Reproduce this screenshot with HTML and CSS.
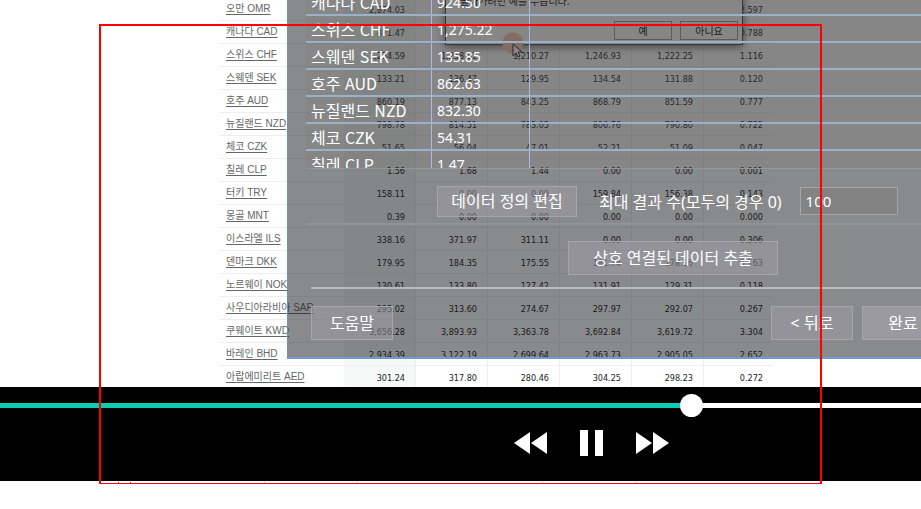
FILE: index.html
```html
<!DOCTYPE html>
<html lang="ko">
<head>
<meta charset="utf-8">
<title>환율 데이터</title>
<link rel="stylesheet" href="styles.css">
</head>
<body>
<main class="video">
  <section class="stage">
    <table class="rates">
      <tbody>
        <tr><th><a href="#">오만 OMR</a></th><td>2,874.03</td><td></td><td></td><td></td><td></td><td>2.597</td></tr>
        <tr><th><a href="#">캐나다 CAD</a></th><td>871.47</td><td></td><td></td><td></td><td></td><td>0.788</td></tr>
        <tr><th><a href="#">스위스 CHF</a></th><td>1,234.59</td><td>1,258.91</td><td>1,210.27</td><td>1,246.93</td><td>1,222.25</td><td>1.116</td></tr>
        <tr><th><a href="#">스웨덴 SEK</a></th><td>133.21</td><td>136.47</td><td>129.95</td><td>134.54</td><td>131.88</td><td>0.120</td></tr>
        <tr><th><a href="#">호주 AUD</a></th><td>860.19</td><td>877.13</td><td>843.25</td><td>868.79</td><td>851.59</td><td>0.777</td></tr>
        <tr><th><a href="#">뉴질랜드 NZD</a></th><td>798.78</td><td>814.51</td><td>783.05</td><td>806.76</td><td>790.80</td><td>0.722</td></tr>
        <tr><th><a href="#">체코 CZK</a></th><td>51.65</td><td>56.04</td><td>47.01</td><td>52.21</td><td>51.09</td><td>0.047</td></tr>
        <tr><th><a href="#">칠레 CLP</a></th><td>1.56</td><td>1.68</td><td>1.44</td><td>0.00</td><td>0.00</td><td>0.001</td></tr>
        <tr><th><a href="#">터키 TRY</a></th><td>158.11</td><td>0.00</td><td>0.00</td><td>159.84</td><td>156.38</td><td>0.143</td></tr>
        <tr><th><a href="#">몽골 MNT</a></th><td>0.39</td><td>0.00</td><td>0.00</td><td>0.00</td><td>0.00</td><td>0.000</td></tr>
        <tr><th><a href="#">이스라엘 ILS</a></th><td>338.16</td><td>371.97</td><td>311.11</td><td>0.00</td><td>0.00</td><td>0.306</td></tr>
        <tr><th><a href="#">덴마크 DKK</a></th><td>179.95</td><td>184.35</td><td>175.55</td><td>181.74</td><td>178.16</td><td>0.163</td></tr>
        <tr><th><a href="#">노르웨이 NOK</a></th><td>130.61</td><td>133.80</td><td>127.42</td><td>131.91</td><td>129.31</td><td>0.118</td></tr>
        <tr><th><a href="#">사우디아라비아 SAR</a></th><td>295.02</td><td>313.60</td><td>274.67</td><td>297.97</td><td>292.07</td><td>0.267</td></tr>
        <tr><th><a href="#">쿠웨이트 KWD</a></th><td>3,656.28</td><td>3,893.93</td><td>3,363.78</td><td>3,692.84</td><td>3,619.72</td><td>3.304</td></tr>
        <tr><th><a href="#">바레인 BHD</a></th><td>2,934.39</td><td>3,122.19</td><td>2,699.64</td><td>2,963.73</td><td>2,905.05</td><td>2.652</td></tr>
        <tr><th><a href="#">아랍에미리트 AED</a></th><td>301.24</td><td>317.80</td><td>280.46</td><td>304.25</td><td>298.23</td><td>0.272</td></tr>
      </tbody>
    </table>

    <div class="prompt">
      <p>돌아가려면 예를 누릅니다.</p>
      <div class="prompt-actions">
        <button type="button">예</button>
        <button type="button">아니요</button>
      </div>
    </div>
    <svg class="pointer" viewBox="0 0 24 26" aria-hidden="true">
      <circle cx="11" cy="11" r="10.500" fill="#f7c4ab"/>
      <path d="M11 12v12l3-3 2 4 2-1-2-4h4z" fill="#fff" stroke="#222" stroke-width="1"/>
    </svg>

    <div class="wizard">
      <div class="preview">
        <table>
          <tbody>
            <tr><td>캐나다 CAD</td><td>924.50</td><td></td></tr>
            <tr><td>스위스 CHF</td><td>1,275.22</td><td></td></tr>
            <tr><td>스웨덴 SEK</td><td>135.85</td><td></td></tr>
            <tr><td>호주 AUD</td><td>862.63</td><td></td></tr>
            <tr><td>뉴질랜드 NZD</td><td>832.30</td><td></td></tr>
            <tr><td>체코 CZK</td><td>54.31</td><td></td></tr>
            <tr><td>칠레 CLP</td><td>1.47</td><td></td></tr>
          </tbody>
        </table>
      </div>
      <div class="options">
        <button type="button" class="btn">데이터 정의 편집</button>
        <label for="limit">최대 결과 수(모두의 경우 0)</label>
        <input id="limit" type="text" value="100">
      </div>
      <div class="extract">
        <button type="button" class="btn">상호 연결된 데이터 추출</button>
      </div>
      <div class="footer">
        <button type="button" class="btn">도움말</button>
        <div class="nav">
          <button type="button" class="btn">&lt; 뒤로</button>
          <button type="button" class="btn primary">완료</button>
        </div>
      </div>
    </div>
  </section>

  <section class="player">
    <input class="seek" type="range" min="0" max="1000" value="757" aria-label="재생 위치">
    <div class="controls">
      <button type="button" aria-label="되감기"><svg width="34" height="28" viewBox="0 0 34 28"><path d="M0 14 16 3v22zM17 14 33 3v22z"/></svg></button>
      <button type="button" aria-label="일시정지"><svg width="34" height="28" viewBox="0 0 34 28"><path d="M5 1h8v26H5zM20 1h8v26h-8z"/></svg></button>
      <button type="button" aria-label="빨리감기"><svg width="34" height="28" viewBox="0 0 34 28"><path d="M16 14 0 3v22zM33 14 17 3v22z"/></svg></button>
    </div>
  </section>
  <svg class="remnant" width="921" height="3" viewBox="0 0 921 3" aria-hidden="true">
    <path d="M118 1h1v2h-1zM130 1h1v2h-1z" fill="#444"/>
    <path d="M264 0h1v3h-1zM357 0h1v3h-1zM542 0h1v3h-1zM636 0h1v3h-1z" fill="#ddd"/>
  </svg>
  <div class="selection"></div>
</main>
</body>
</html>
```
FILE: styles.css
```css
* { box-sizing: border-box; }

body {
  margin: 0;
  background: #fff;
  font-family: "Noto Sans", "Noto Sans CJK KR", sans-serif;
}

button, input { font: inherit; margin: 0; }

.video { position: relative; overflow: hidden; padding-bottom: 25px; }

.stage {
  position: relative;
  overflow: hidden;
  background: #fff;
}

/* exchange rate list */
.rates {
  margin: -2px 0 -2px 219px;
  width: 553px;
  table-layout: fixed;
  border-collapse: separate;
  border-spacing: 0;
}

.rates th, .rates td {
  height: 23px;
  border-bottom: 1px solid #eee;
  white-space: nowrap;
}

.rates th {
  width: 125px;
  padding: 0 0 0 7px;
  text-align: left;
  font: 10px/20px "Liberation Sans", "Noto Sans CJK KR", sans-serif;
}

.rates a {
  color: #666;
  text-decoration: underline;
  text-underline-offset: 2px;
}

.rates td {
  width: 72px;
  padding: 2px 10px 0 0;
  border-right: 1px solid #eee;
  text-align: right;
  color: #222;
  font: 9px/20px "DejaVu Sans Condensed", "DejaVu Sans", sans-serif;
}

.rates td:nth-child(2) { background: #f5f9f7; }
.rates td:last-child { width: 68px; padding-right: 9px; border-right: 0; }

/* confirmation prompt beneath the wizard */
.prompt {
  position: absolute;
  left: 445px;
  top: -9px;
  width: 298px;
  padding: 0 4px 4px 14px;
  border: 1px solid #444;
  background: #fff;
  box-shadow: 0 2px 8px rgba(0, 0, 0, .6);
  font: 10px/18px "Noto Sans CJK KR", sans-serif;
  color: #111;
}

.prompt p { margin: 0 0 11px; }

.prompt-actions { display: flex; justify-content: flex-end; gap: 8px; }

.prompt-actions button {
  width: 58px;
  height: 19px;
  padding: 0;
  border: 1px solid #999;
  background: #fff;
  line-height: 15px;
}

.pointer {
  position: absolute;
  left: 502px;
  top: 32px;
  width: 24px;
  height: 26px;
}

/* translucent wizard window */
.wizard {
  position: absolute;
  left: 287px;
  right: 0;
  top: 0;
  overflow: hidden;
  padding-left: 18px;
  border-left: 1px solid #6f8fb5;
  border-bottom: 2px solid #6f9bd0;
  background: rgba(20, 22, 25, .5);
  background-clip: padding-box;
  color: #fff;
  font-size: 16px;
}

.preview {
  height: 169px;
  overflow: hidden;
  background: rgba(120, 115, 110, .15);
  border-bottom: 1px solid #949698;
}

.preview table {
  width: 100%;
  margin-top: -11px;
  table-layout: fixed;
  border-collapse: separate;
  border-spacing: 0;
}

.preview td {
  height: 27px;
  padding: 2px 0 0 5px;
  border-bottom: 2px solid #9bb1c9;
  border-right: 1px solid #a9bed6;
  font-size: 15px;
  line-height: 23px;
  white-space: nowrap;
}

.preview td:nth-child(1) { width: 126px; font-family: "Noto Sans CJK KR", sans-serif; font-size: 16px; }
.preview td:nth-child(2) { width: 98px; font-size: 14px; }
.preview td:nth-child(3) { border-right: 0; }

.options {
  display: flex;
  align-items: center;
  height: 56px;
  padding: 10px 0 0 131px;
  border-bottom: 2px solid #929496;
  white-space: nowrap;
}

.options label { margin: 0 18px 0 22px; }

.options input {
  width: 98px;
  height: 28px;
  padding: 0 5px;
  border: 1px solid #a5a5a8;
  background: #848383;
  color: #fff;
  font-size: 15px;
}

.btn {
  height: 34px;
  padding: 0;
  border: 1px solid #a6a5a9;
  background: rgba(160, 155, 168, .5);
  color: #fff;
  line-height: 32px;
  white-space: nowrap;
}

.options .btn { width: 140px; height: 31px; line-height: 29px; flex: none; }

.extract {
  padding: 16px 0 12px 262px;
}

.extract .btn { display: block; width: 210px; }

.footer {
  display: flex;
  justify-content: space-between;
  margin-left: 5px;
  padding: 17px 0;
  border-top: 2px solid #b8babc;
}

.footer .btn { width: 82px; flex: none; }

.nav { display: flex; gap: 9px; margin-right: -23px; }

.footer .primary { background: #9c9aa1; }

/* playback bar */
.player {
  height: 94px;
  padding-top: 6px;
  background: #000;
}

.seek {
  display: block;
  width: 100%;
  height: 24px;
  appearance: none;
  background: linear-gradient(to right, #0ccbae 75%, #fff 75%) center / 100% 5px no-repeat;
}

.seek::-webkit-slider-thumb {
  appearance: none;
  width: 23px;
  height: 23px;
  border-radius: 50%;
  background: #fff;
}

.controls {
  display: flex;
  justify-content: center;
  gap: 27px;
  margin-top: 12px;
  padding-left: 262px;
}

.controls button {
  display: block;
  padding: 0;
  border: 0;
  background: none;
}

.controls svg { display: block; fill: #fff; }

.remnant { display: block; }

/* highlighted capture region */
.selection {
  position: absolute;
  left: 99px;
  top: 24px;
  width: 723px;
  height: 460px;
  border: 2px solid #f00;
  border-bottom-width: 1px;
  pointer-events: none;
}
```
